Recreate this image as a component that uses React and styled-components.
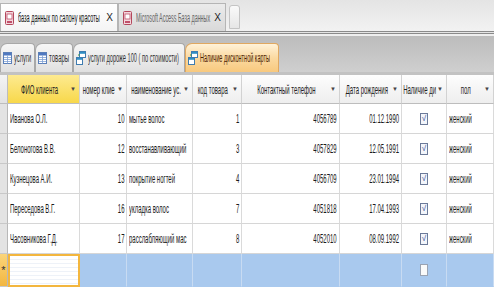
import React from "react";
import styled, { createGlobalStyle } from "styled-components";

const GlobalStyle = createGlobalStyle`
  html, body { margin: 0; padding: 0; background: #fff; }
  body { font-family: "Liberation Sans", Arial, sans-serif; }
`;

// ── Layout ──────────────────────────────────────────────────
const Window = styled.div`
  width: 494px;
  height: 287px;
  overflow: hidden;
  display: flex;
  flex-direction: column;
  background: #fff;
`;

// Narrow text: the glyphs are squeezed sideways, the box keeps its slot
const Squeeze = styled.span`
  display: inline-block;
  white-space: nowrap;
  font-size: ${(p) => p.$size || 13}px;
  transform: scaleX(${(p) => p.$sx || 0.46});
  transform-origin: ${(p) => p.$origin || "left"} center;
`;

const Slot = styled.div`
  flex: 1;
  min-width: 0;
  display: flex;
  justify-content: ${(p) => p.$justify || "flex-start"};
`;

// Document tabs strip
const DocStrip = styled.div`
  height: 31px;
  flex-shrink: 0;
  display: flex;
  align-items: flex-end;
  background: linear-gradient(#e4e4e4, #f2f2f2);
  border-bottom: 3px double #8a8a8a;
`;

const DocTab = styled.div`
  height: 28px;
  width: ${(p) => p.$w}px;
  display: flex;
  align-items: center;
  gap: 4px;
  padding: 0 4px;
  box-sizing: border-box;
  background: ${(p) =>
    p.$active ? "linear-gradient(#fff, #f4f4f4)" : "linear-gradient(#ebebeb, #d9d9d9)"};
  border: 1px solid #b5b5b5;
  border-bottom: none;
  color: ${(p) => (p.$active ? "#111" : "#666")};
`;

const Close = styled.span`
  font-size: 10px;
  color: #222;
  flex-shrink: 0;
`;

const NewTab = styled.div`
  width: 9px;
  height: 22px;
  margin: 0 0 2px 3px;
  border: 1px solid #c4c4c4;
  border-radius: 3px 3px 0 0;
  background: linear-gradient(#fafafa, #e6e6e6);
`;

// Object tabs strip
const ObjStrip = styled.div`
  height: 36px;
  flex-shrink: 0;
  display: flex;
  align-items: flex-end;
  background: linear-gradient(#bcbcbc, #cfcfcf);
  border-top: 2px solid #eee;
  border-bottom: 3px solid #c2c2c2;
`;

const ObjTab = styled.div`
  height: 29px;
  width: ${(p) => p.$w}px;
  display: flex;
  align-items: center;
  gap: 2px;
  padding: 0 2px;
  box-sizing: border-box;
  border: 1px solid ${(p) => (p.$active ? "#e0a860" : "#a8a8a8")};
  border-bottom: none;
  border-radius: 7px 4px 0 0;
  background: ${(p) =>
    p.$active
      ? "linear-gradient(#fff2d8, #fbd9a0 50%, #f8c97e)"
      : "linear-gradient(#f6f6f6, #e0e0e0)"};
  color: ${(p) => (p.$active ? "#4a2200" : "#333")};
`;

const IconBox = styled.span`
  flex-shrink: 0;
  display: flex;
`;

// Datasheet grid
const COLS = "8px 72px 47px 66px 49px 98px 62px 45px 47px";

const Sheet = styled.div`
  display: grid;
  grid-template-columns: ${COLS};
  grid-template-rows: 29px repeat(5, 30px) 33px;
`;

const Head = styled.div`
  display: flex;
  align-items: center;
  position: relative;
  padding: 0 10px 0 2px;
  box-sizing: border-box;
  overflow: hidden;
  color: #222;
  background: ${(p) =>
    p.$sel ? "linear-gradient(#fdea90, #f8d84a)" : "linear-gradient(#fdfdfd, #eeeeee)"};
  border-right: 1px solid #d2d2d2;
  border-bottom: 1px solid #bdbdbd;
`;

const Arrow = styled.span`
  position: absolute;
  right: 3px;
  top: 11px;
  font-size: 6px;
  color: #444;
`;

const Corner = styled.div`
  background: linear-gradient(#f4f4f4, #e2e2e2);
  border-right: 1px solid #bdbdbd;
  border-bottom: 1px solid #bdbdbd;
`;

const Selector = styled.div`
  display: flex;
  align-items: center;
  justify-content: center;
  font-size: 11px;
  color: #333;
  background: ${(p) => (p.$new ? "linear-gradient(#fbd57a, #f2b640)" : "#e3e3e3")};
  border-right: 1px solid #b8b8b8;
  border-bottom: 1px solid #c8c8c8;
`;

const Cell = styled.div`
  display: flex;
  align-items: center;
  padding: 0 2px;
  box-sizing: border-box;
  overflow: hidden;
  color: #1a1a1a;
  background: ${(p) => (p.$new ? "#a9c9ee" : "#fff")};
  border-right: 1px solid ${(p) => (p.$new ? "#c8dbf2" : "#dadada")};
  border-bottom: 1px solid ${(p) => (p.$new ? "#a9c9ee" : "#d6d6d6")};
`;

const FocusCell = styled.div`
  border: 2px solid #f3b63e;
  background: repeating-linear-gradient(#fff 0 3px, #eef2f8 3px 4px);
`;

const Check = styled.div`
  margin: 0 auto;
  width: 8px;
  height: 12px;
  box-sizing: border-box;
  border: 1px solid ${(p) => (p.$empty ? "#9aa3b2" : "#6c7a99")};
  background: ${(p) => (p.$empty ? "#fafafa" : "#f3f6fb")};
  display: flex;
  align-items: center;
  justify-content: center;
  font-size: 8px;
  line-height: 1;
  color: #26358a;
`;

// ── Icons ───────────────────────────────────────────────────
const AccessIcon = () => (
  <IconBox>
    <svg width="9" height="14" viewBox="0 0 9 14">
      <rect x="0.5" y="0.5" width="8" height="13" rx="1" fill="#f3d6dc" stroke="#b4475c" />
      <rect x="2" y="3" width="5" height="5" fill="#fff" stroke="#c0506a" strokeWidth="0.8" />
      <rect x="2" y="10" width="5" height="2" fill="#c0506a" />
    </svg>
  </IconBox>
);

const TableIcon = () => (
  <IconBox>
    <svg width="9" height="12" viewBox="0 0 9 12">
      <rect x="0.5" y="0.5" width="8" height="11" fill="#fff" stroke="#5b7fb8" />
      <rect x="1" y="1" width="7" height="2.5" fill="#4f78c0" />
      <path d="M1 5.5h7M1 7.5h7M1 9.5h7M4.5 3.5v8" stroke="#7ea0d4" strokeWidth="0.8" />
    </svg>
  </IconBox>
);

const QueryIcon = () => (
  <IconBox>
    <svg width="10" height="14" viewBox="0 0 10 14">
      <rect x="3.5" y="0.5" width="6" height="6" fill="#fff" stroke="#3f7cb0" />
      <rect x="4" y="1" width="5" height="1.8" fill="#2f8fc4" />
      <rect x="0.5" y="6.5" width="6" height="7" fill="#fff" stroke="#3f7cb0" />
      <rect x="1" y="7" width="5" height="1.8" fill="#2f8fc4" />
      <path d="M2 4h1.5" stroke="#3a9a3a" strokeWidth="1" />
    </svg>
  </IconBox>
);

// ── Data ────────────────────────────────────────────────────
const HEADERS = [
  { label: "ФИО клиента", sel: true },
  { label: "номер клие" },
  { label: "наименование ус." },
  { label: "код товара" },
  { label: "Контактный телефон" },
  { label: "Дата рождения" },
  { label: "Наличие ди" },
  { label: "пол" },
];

const ROWS = [
  ["Иванова О.Л.", "10", "мытье волос", "1", "4056789", "01.12.1990"],
  ["Белоногова В.В.", "12", "восстанавливающий", "3", "4057829", "12.05.1991"],
  ["Кузнецова А.И.", "13", "покрытие ногтей", "4", "4056709", "23.01.1994"],
  ["Переседова В.Г.", "16", "укладка волос", "7", "4051818", "17.04.1993"],
  ["Часовникова Г.Д.", "17", "расслабляющий мас", "8", "4052010", "08.09.1992"],
];

const Text = ({ children, right }) => (
  <Slot $justify={right ? "flex-end" : "flex-start"}>
    <Squeeze $origin={right ? "right" : "left"}>{children}</Squeeze>
  </Slot>
);

const TabLabel = ({ children, sx = 0.48 }) => (
  <Slot>
    <Squeeze $size={12} $sx={sx}>{children}</Squeeze>
  </Slot>
);

// ── Component ────────────────────────────────────────────────
const App = () => (
  <Window>
    <GlobalStyle />

    <DocStrip>
      <DocTab $active $w={118}>
        <AccessIcon />
        <TabLabel sx={0.46}>база данных по салону красоты</TabLabel>
        <Close>X</Close>
      </DocTab>
      <DocTab $w={108}>
        <AccessIcon />
        <TabLabel sx={0.45}>Microsoft Access База данных</TabLabel>
        <Close>X</Close>
      </DocTab>
      <NewTab />
    </DocStrip>

    <ObjStrip>
      <ObjTab $w={35}>
        <TableIcon />
        <TabLabel sx={0.48}>услуги</TabLabel>
      </ObjTab>
      <ObjTab $w={38}>
        <TableIcon />
        <TabLabel sx={0.5}>товары</TabLabel>
      </ObjTab>
      <ObjTab $w={112}>
        <QueryIcon />
        <TabLabel sx={0.47}>услуги дороже 100 ( по стоимости)</TabLabel>
      </ObjTab>
      <ObjTab $active $w={94}>
        <QueryIcon />
        <TabLabel sx={0.46}>Наличие дисконтной карты</TabLabel>
      </ObjTab>
    </ObjStrip>

    <Sheet>
      <Corner />
      {HEADERS.map((h) => (
        <Head key={h.label} $sel={h.sel}>
          <Slot $justify="center">
            <Squeeze $origin="center">{h.label}</Squeeze>
          </Slot>
          <Arrow>▼</Arrow>
        </Head>
      ))}

      {ROWS.map((r) => (
        <React.Fragment key={r[0]}>
          <Selector />
          <Cell><Text>{r[0]}</Text></Cell>
          <Cell><Text right>{r[1]}</Text></Cell>
          <Cell><Text>{r[2]}</Text></Cell>
          <Cell><Text right>{r[3]}</Text></Cell>
          <Cell><Text right>{r[4]}</Text></Cell>
          <Cell><Text right>{r[5]}</Text></Cell>
          <Cell><Check>√</Check></Cell>
          <Cell><Text>женский</Text></Cell>
        </React.Fragment>
      ))}

      <Selector $new>*</Selector>
      <FocusCell />
      <Cell $new />
      <Cell $new />
      <Cell $new />
      <Cell $new />
      <Cell $new />
      <Cell $new><Check $empty /></Cell>
      <Cell $new />
    </Sheet>
  </Window>
);

export default App;
